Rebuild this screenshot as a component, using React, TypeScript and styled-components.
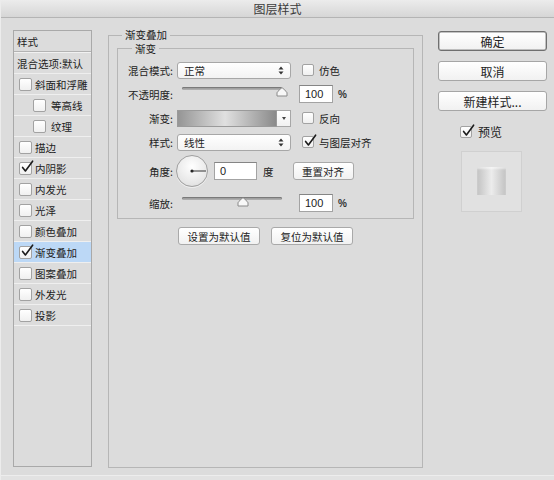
import styled, { createGlobalStyle } from "styled-components";

const GlobalStyle = createGlobalStyle`
  html, body {
    margin: 0;
    padding: 0;
    background: #dcdcdc;
  }
  body {
    font-family: "Noto Sans CJK SC", "Noto Sans", sans-serif;
    font-size: 10.5px;
    color: #222222;
  }
`;

const Window = styled.div`
  width: 554px;
  height: 480px;
  display: flex;
  flex-direction: column;
  background: #dcdcdc;
  border-left: 1px solid #ececec;
  box-sizing: border-box;
  overflow: hidden;
`;

const TitleBar = styled.div`
  height: 17px;
  flex: none;
  display: flex;
  align-items: center;
  justify-content: center;
  font-size: 12px;
  color: #3a3a3a;
  background: linear-gradient(#ececec, #d6d6d6);
  border-bottom: 1px solid #b4b4b4;
`;

const Body = styled.div`
  flex: 1;
  display: flex;
  align-items: flex-start;
  padding: 12px 0 0 12px;
`;

const Footer = styled.div`
  flex: none;
  height: 4px;
  border-top: 1px solid #ededed;
  background: #e2e2e2;
`;

/* ---------- left style list ---------- */

const StyleList = styled.div`
  width: 79px;
  height: 437px;
  flex: none;
  box-sizing: border-box;
  border: 1px solid #a9a9a9;
  margin-right: 16px;
`;

const ListHeader = styled.div`
  height: 20px;
  display: flex;
  align-items: center;
  padding-left: 3px;
  border-bottom: 1px solid #b3b3b3;
  box-shadow: 0 1px 0 #f1f1f1;
`;

const BlendRow = styled.div`
  height: 20px;
  margin-top: 1px;
  display: flex;
  align-items: center;
  padding-left: 3px;
  border-bottom: 1px solid #eeeeee;
  white-space: nowrap;
`;

const StyleRow = styled.div<{ $indent?: boolean; $selected?: boolean }>`
  height: 20px;
  display: flex;
  align-items: center;
  gap: ${(p) => (p.$indent ? 5 : 3)}px;
  padding-left: ${(p) => (p.$indent ? 19 : 5)}px;
  border-bottom: 1px solid #efefef;
  background: ${(p) => (p.$selected ? "#bcd8f6" : "transparent")};
  white-space: nowrap;
`;

/* ---------- checkbox ---------- */

const BoxWrap = styled.span<{ $size?: number }>`
  position: relative;
  flex: none;
  width: ${(p) => p.$size ?? 13}px;
  height: ${(p) => p.$size ?? 13}px;
  box-sizing: border-box;
  border: 1px solid #a2a2a2;
  border-radius: 2px;
  background: linear-gradient(#ffffff, #f0f0f0);
`;

const CheckMark = styled.svg`
  position: absolute;
  left: 0;
  top: -3px;
  width: 14px;
  height: 14px;
  overflow: visible;
`;

const Checkbox = ({ checked, size }: { checked?: boolean; size?: number }) => (
  <BoxWrap $size={size}>
    {checked && (
      <CheckMark viewBox="0 0 14 14">
        <path
          d="M2.6 7.4 L5.4 11 L12.6 1.2"
          fill="none"
          stroke="#1b1b1b"
          strokeWidth="1.6"
          strokeLinecap="round"
          strokeLinejoin="round"
        />
      </CheckMark>
    )}
  </BoxWrap>
);

const CheckLabel = styled.span<{ $gap?: number }>`
  display: inline-flex;
  align-items: center;
  gap: ${(p) => p.$gap ?? 5}px;
  white-space: nowrap;
`;

/* ---------- group boxes ---------- */

const MainGroup = styled.fieldset`
  flex: none;
  width: 315px;
  height: 438px;
  box-sizing: border-box;
  margin: 0 15px 0 0;
  padding: 3px 8px 0 8px;
  border: 1px solid #b6b6b6;
  min-inline-size: 0;
`;

const Legend = styled.legend<{ $offset: number }>`
  margin-left: ${(p) => p.$offset}px;
  padding: 0 3px;
  line-height: 10px;
  font-size: 10.5px;
`;

const InnerGroup = styled.fieldset`
  margin: 0;
  padding: 4px 0 0 0;
  border: 1px solid #b6b6b6;
  min-inline-size: 0;
`;

const InnerLegend = styled.legend`
  margin-left: 14px;
  padding: 0 3px;
  line-height: 11px;
  font-size: 10.5px;
`;

const Row = styled.div<{ $h?: number }>`
  height: ${(p) => p.$h ?? 24}px;
  display: flex;
  align-items: center;
`;

const Label = styled.span`
  width: 55px;
  flex: none;
  text-align: right;
  margin-right: 4px;
  white-space: nowrap;
`;

const UnitLabel = styled.span`
  margin-left: 6px;
  white-space: nowrap;
`;

const Select = styled.div`
  width: 114px;
  height: 17px;
  flex: none;
  box-sizing: border-box;
  display: flex;
  align-items: center;
  justify-content: space-between;
  padding: 0 6px 0 6px;
  border: 1px solid #a7a7a7;
  border-radius: 3px;
  background: linear-gradient(#ffffff, #f3f3f3);
  margin-right: 11px;
`;

const UpDown = () => (
  <svg width="6" height="9" viewBox="0 0 6 9">
    <path d="M0.5 3.6 L3 0.6 L5.5 3.6 Z M0.5 5.4 L3 8.4 L5.5 5.4 Z" fill="#333" />
  </svg>
);

const SliderBox = styled.div<{ $lift: number }>`
  position: relative;
  width: 100px;
  height: 10px;
  flex: none;
  margin: 0 0 ${(p) => p.$lift}px 5px;
`;

const Track = styled.div`
  height: 3px;
  border-radius: 2px;
  background: linear-gradient(#8c8c8c, #b4b4b4);
  box-shadow: inset 0 1px 0 #7a7a7a;
`;

const Thumb = styled.svg`
  position: absolute;
  top: 0;
  width: 12px;
  height: 10px;
  margin-left: -6px;
`;

const Slider = ({ value, lift }: { value: number; lift: number }) => (
  <SliderBox $lift={lift}>
    <Track />
    <Thumb viewBox="0 0 12 10" style={{ left: `${value}%` }}>
      <path
        d="M1 9 L1 6 Q1 5 2 4.3 L5.2 1.2 Q6 0.6 6.8 1.2 L10 4.3 Q11 5 11 6 L11 9 Z"
        fill="#f8f8f8"
        stroke="#8a8a8a"
        strokeWidth="1"
      />
    </Thumb>
  </SliderBox>
);

const NumberField = styled.div<{ $w?: number }>`
  width: ${(p) => p.$w ?? 34}px;
  height: 18px;
  flex: none;
  box-sizing: border-box;
  display: flex;
  align-items: center;
  padding-left: 5px;
  background: #ffffff;
  border: 1px solid #a3a3a3;
  border-top-color: #858585;
  font-family: "Liberation Sans", "Noto Sans CJK SC", sans-serif;
  font-size: 11px;
`;

const Unit = styled.span`
  margin-left: 5px;
  font-family: "Liberation Sans", "Noto Sans CJK SC", sans-serif;
  font-weight: bold;
  font-size: 10px;
  color: #333;
`;

const GradientPicker = styled.div`
  width: 114px;
  height: 17px;
  flex: none;
  display: flex;
  margin-right: 11px;
`;

const Swatch = styled.div`
  flex: 1;
  box-sizing: border-box;
  border: 1px solid #9a9a9a;
  background: linear-gradient(to right, #959595, #e0e0e0 48%, #8a8a8a);
`;

const DropArrow = styled.div`
  width: 14px;
  box-sizing: border-box;
  display: flex;
  align-items: center;
  justify-content: center;
  border: 1px solid #a7a7a7;
  border-left: none;
  background: linear-gradient(#ffffff, #f1f1f1);
  &::after {
    content: "";
    border-left: 2.5px solid transparent;
    border-right: 2.5px solid transparent;
    border-top: 3px solid #444;
  }
`;

const Dial = styled.div`
  width: 32px;
  height: 32px;
  flex: none;
  margin-left: -1px;
  box-sizing: border-box;
  border-radius: 50%;
  border: 1px solid #a0a0a0;
  background: radial-gradient(circle at 50% 35%, #ffffff, #e6e6e6 70%, #d6d6d6);
  box-shadow: 0 1px 0 #efefef;
`;

const PushButton = styled.div<{ $w: number; $ml?: number }>`
  width: ${(p) => p.$w}px;
  height: 18px;
  flex: none;
  margin-left: ${(p) => p.$ml ?? 0}px;
  box-sizing: border-box;
  display: flex;
  align-items: center;
  justify-content: center;
  border: 1px solid #a9a9a9;
  border-radius: 3px;
  background: linear-gradient(#ffffff, #f1f1f1);
  white-space: nowrap;
`;

const DefaultsRow = styled.div`
  display: flex;
  justify-content: center;
  gap: 11px;
  margin-top: 8px;
`;

/* ---------- right column ---------- */

const SideColumn = styled.div`
  width: 109px;
  flex: none;
  display: flex;
  flex-direction: column;
  gap: 10px;
  margin-top: 1px;
`;

const DialogButton = styled.div<{ $primary?: boolean }>`
  height: 20px;
  box-sizing: border-box;
  display: flex;
  align-items: center;
  justify-content: center;
  border: 1px solid ${(p) => (p.$primary ? "#6f6f6f" : "#a6a6a6")};
  border-radius: 3px;
  background: linear-gradient(#ffffff, #f1f1f1);
  box-shadow: ${(p) => (p.$primary ? "inset 0 0 0 0.5px #8a8a8a" : "none")};
  font-size: 12px;
`;

const PreviewToggle = styled.div`
  margin-top: 2px;
  padding-left: 22px;
  font-size: 12px;
`;

const PreviewBox = styled.div`
  width: 61px;
  height: 61px;
  margin-left: 23px;
  box-sizing: border-box;
  display: flex;
  align-items: center;
  justify-content: center;
  border: 1px solid #d0d0d0;
  background: #e1e1e1;
`;

const PreviewSwatch = styled.div`
  width: 29px;
  height: 28px;
  background: linear-gradient(to right, #c2c2c2, #ececec 50%, #c2c2c2);
  box-shadow: inset 0 2px 2px rgba(255, 255, 255, 0.5);
`;

const layerStyles = [
  { name: "斜面和浮雕" },
  { name: "等高线", indent: true },
  { name: "纹理", indent: true },
  { name: "描边" },
  { name: "内阴影", checked: true },
  { name: "内发光" },
  { name: "光泽" },
  { name: "颜色叠加" },
  { name: "渐变叠加", checked: true, selected: true },
  { name: "图案叠加" },
  { name: "外发光" },
  { name: "投影" },
];

const App = () => {
  return (
    <>
      <GlobalStyle />
      <Window>
        <TitleBar>图层样式</TitleBar>
        <Body>
          <StyleList>
            <ListHeader>样式</ListHeader>
            <BlendRow>混合选项:默认</BlendRow>
            {layerStyles.map((s) => (
              <StyleRow key={s.name} $indent={s.indent} $selected={s.selected}>
                <Checkbox checked={s.checked} />
                {s.name}
              </StyleRow>
            ))}
          </StyleList>

          <MainGroup>
            <Legend $offset={5}>渐变叠加</Legend>
            <InnerGroup>
              <InnerLegend>渐变</InnerLegend>
              <Row>
                <Label>混合模式:</Label>
                <Select>
                  正常
                  <UpDown />
                </Select>
                <CheckLabel>
                  <Checkbox size={12} />
                  仿色
                </CheckLabel>
              </Row>
              <Row>
                <Label>不透明度:</Label>
                <Slider value={100} lift={5} />
                <NumberField style={{ marginLeft: 17 }}>100</NumberField>
                <Unit>%</Unit>
              </Row>
              <Row>
                <Label>渐变:</Label>
                <GradientPicker>
                  <Swatch />
                  <DropArrow />
                </GradientPicker>
                <CheckLabel>
                  <Checkbox size={12} />
                  反向
                </CheckLabel>
              </Row>
              <Row>
                <Label>样式:</Label>
                <Select>
                  线性
                  <UpDown />
                </Select>
                <CheckLabel>
                  <Checkbox size={12} checked />
                  与图层对齐
                </CheckLabel>
              </Row>
              <Row $h={34}>
                <Label>角度:</Label>
                <Dial>
                  <svg width="30" height="30" viewBox="0 0 30 30">
                    <circle cx="15" cy="15" r="1.6" fill="#222" />
                    <line x1="15" y1="15" x2="29" y2="15" stroke="#333" strokeWidth="1" />
                  </svg>
                </Dial>
                <NumberField $w={43} style={{ marginLeft: 6 }}>
                  0
                </NumberField>
                <UnitLabel>度</UnitLabel>
                <PushButton $w={61} $ml={19}>
                  重置对齐
                </PushButton>
              </Row>
              <Row $h={30}>
                <Label>缩放:</Label>
                <Slider value={61} lift={2} />
                <NumberField style={{ marginLeft: 17 }}>100</NumberField>
                <Unit>%</Unit>
              </Row>
            </InnerGroup>
            <DefaultsRow>
              <PushButton $w={82}>设置为默认值</PushButton>
              <PushButton $w={82}>复位为默认值</PushButton>
            </DefaultsRow>
          </MainGroup>

          <SideColumn>
            <DialogButton $primary>确定</DialogButton>
            <DialogButton>取消</DialogButton>
            <DialogButton>新建样式...</DialogButton>
            <PreviewToggle>
              <CheckLabel $gap={6}>
                <Checkbox size={12} checked />
                预览
              </CheckLabel>
            </PreviewToggle>
            <PreviewBox>
              <PreviewSwatch />
            </PreviewBox>
          </SideColumn>
        </Body>
        <Footer />
      </Window>
    </>
  );
};

export default App;
